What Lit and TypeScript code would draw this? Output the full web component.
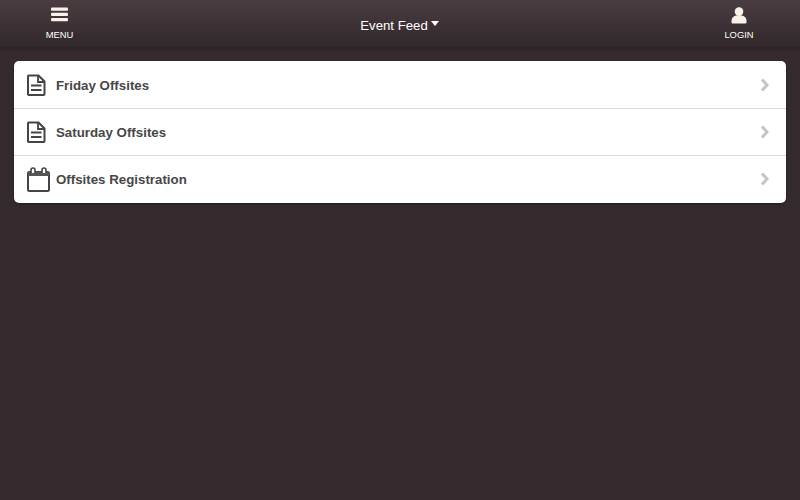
import { LitElement, css, html, svg } from "lit";
import { customElement } from "lit/decorators.js";

const docIcon = svg`<svg class="icon" width="19" height="22" viewBox="0 0 19 22" fill="none" stroke="#444" stroke-width="2">
  <path d="M1.700 1.500h9.800l6 6V20.300a.7.7 0 0 1-.7.7H1.700a.7.7 0 0 1-.7-.7V2.200a.7.7 0 0 1 .7-.7z" />
  <path d="M11 1.500v6.500h6.500" stroke-width="1.800" />
  <path d="M4 11.500h10.500M4 16h10.500" />
</svg>`;

const calIcon = svg`<svg class="icon" width="24" height="25" viewBox="0 0 24 25" fill="none">
  <rect x="1" y="5" width="21" height="19" rx="1.500" stroke="#444" stroke-width="2" />
  <path d="M1 4.500h21v4.500H1z" fill="#555" />
  <path d="M4 6V3a2 2 0 0 1 4 0V6M15 6V3a2 2 0 0 1 4 0V6" stroke="#444" stroke-width="1.600" fill="#fff" />
</svg>`;

const rows = [
  { label: "Friday Offsites", icon: docIcon },
  { label: "Saturday Offsites", icon: docIcon },
  { label: "Offsites Registration", icon: calIcon },
];

@customElement("app-root")
export class AppRoot extends LitElement {
  static styles = css`
    :host {
      display: block;
      width: 800px;
      height: 500px;
      background: #352a2e;
      font-family: "Liberation Sans", Arial, sans-serif;
      overflow: hidden;
    }

    .bar {
      height: 47px;
      display: flex;
      align-items: flex-start;
      justify-content: space-between;
      background: linear-gradient(#4a3d41, #31282b);
      box-shadow: 0 1px 3px rgba(30, 22, 25, 0.5);
      color: #fff;
    }

    .bar-btn {
      width: 119px;
      height: 47px;
      display: flex;
      flex-direction: column;
      align-items: center;
      padding-top: 7px;
      box-sizing: border-box;
      font-size: 9.400px;
      line-height: 12px;
    }

    .bar-btn svg {
      height: 15px;
      margin-bottom: 7px;
      display: block;
    }

    .login svg {
      height: 17px;
      margin-bottom: 5px;
    }

    .login {
      width: 122px;
    }

    .title {
      display: flex;
      align-items: center;
      gap: 3px;
      height: 50px;
      padding-left: 2px;
      font-size: 13.200px;
    }

    .caret {
      width: 0;
      height: 0;
      border-left: 4.500px solid transparent;
      border-right: 4.500px solid transparent;
      border-top: 5px solid #fff;
      margin-top: -3px;
    }

    .card {
      margin: 14px 14px 0;
      background: #fff;
      border-radius: 5px;
      box-shadow: 0 1px 2px rgba(0, 0, 0, 0.4);
    }

    .row {
      height: 47px;
      display: flex;
      align-items: center;
      border-bottom: 1px solid #dcdcdc;
      box-sizing: border-box;
      padding: 0 16px 0 13px;
      color: #474747;
      font-size: 13.300px;
      font-weight: bold;
    }

    .row:first-child {
      height: 48px;
      padding-top: 1px;
    }

    .row:last-child {
      border-bottom: none;
      padding-bottom: 1px;
    }

    .icon-cell {
      width: 29px;
      display: flex;
    }

    .label {
      flex: 1;
    }
  `;

  render() {
    return html`
      <div class="bar">
        <div class="bar-btn">
          <svg width="17" height="15" viewBox="0 0 17 15" fill="#f7f3ea">
            <rect y="0.5" width="17" height="3.2" rx="1" />
            <rect y="5.8" width="17" height="3.2" rx="1" />
            <rect y="11" width="17" height="3.2" rx="1" />
          </svg>
          MENU
        </div>
        <div class="title">Event Feed <span class="caret"></span></div>
        <div class="bar-btn login">
          <svg width="16" height="17" viewBox="0 0 16 17" fill="#f7f3ea">
            <ellipse cx="8" cy="4.6" rx="4.3" ry="4.4" />
            <path d="M5 8.500h6c3 .6 4.500 2.600 4.500 5.500v1.500a1 1 0 0 1-1 1h-13a1 1 0 0 1-1-1V14c0-2.900 1.500-4.900 4.500-5.500z" />
          </svg>
          LOGIN
        </div>
      </div>
      <div class="card">
        ${rows.map(
          (r) => html`
            <div class="row">
              <div class="icon-cell">${r.icon}</div>
              <div class="label">${r.label}</div>
              <svg width="10" height="14" viewBox="0 0 10 14" fill="none" stroke="#c4c4c4" stroke-width="3">
                <path d="M2 1.500 7 7l-5 5.500" />
              </svg>
            </div>
          `
        )}
      </div>
    `;
  }
}
